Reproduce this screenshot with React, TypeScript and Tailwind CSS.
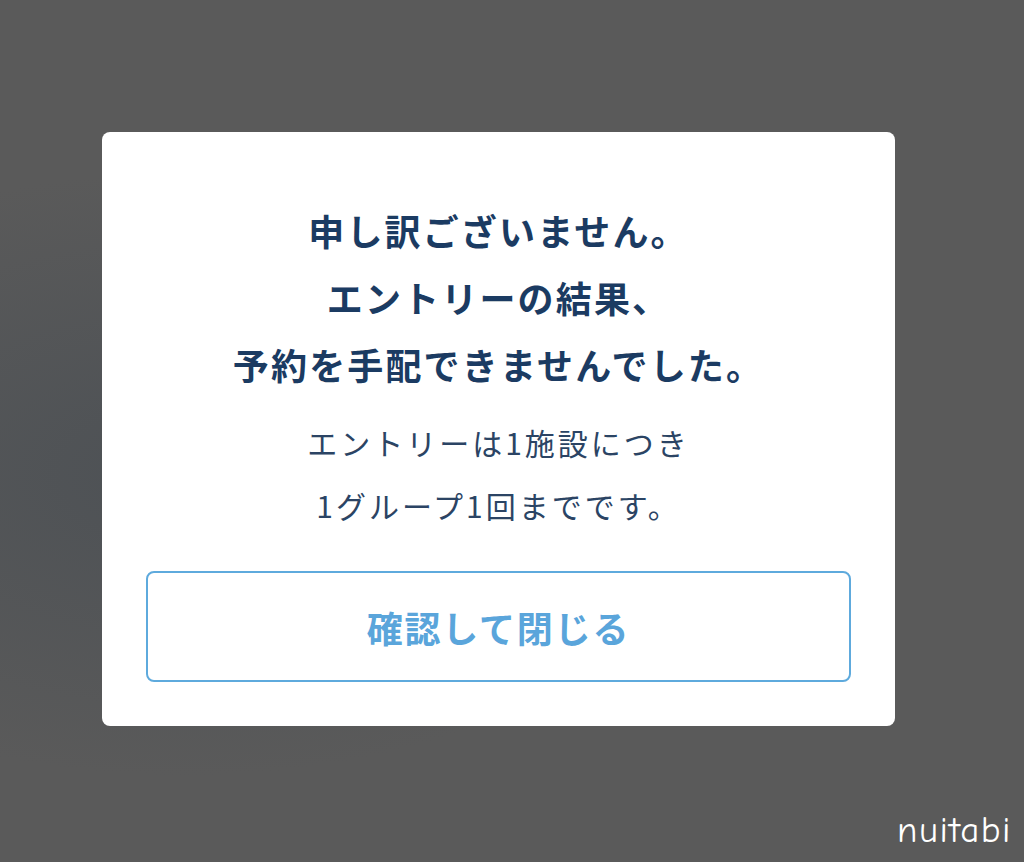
const titleLines = ["申し訳ございません。", "エントリーの結果、", "予約を手配できませんでした。"];
const bodyLines = ["エントリーは1施設につき", "1グループ1回までです。"];

const App = () => {
    return (
        <div className="relative w-[1024px] h-[862px] overflow-hidden bg-[#5a5a5a] bg-[radial-gradient(ellipse_at_18%_55%,#4d5155_0%,#5a5a5a_45%)] pl-[102px] pt-[132px] font-['Noto_Sans_CJK_JP','Noto_Sans',sans-serif]">
            <div className="w-[793px] h-[594px] rounded-lg bg-white px-[44px] pt-[65px] pb-[44px] flex flex-col">
                <div className="flex flex-col items-center text-[#1b3b62] font-bold text-[36px] leading-[67px] tracking-[0.06em]">
                    {titleLines.map((line) => (
                        <p key={line}>{line}</p>
                    ))}
                </div>
                <div className="mt-[13px] flex flex-col items-center text-[#2b4464] text-[30px] leading-[63px] tracking-[0.1em]">
                    {bodyLines.map((line) => (
                        <p key={line}>{line}</p>
                    ))}
                </div>
                <button className="mt-[34px] h-[111px] w-full rounded-lg border-2 border-[#5eaadd] bg-white text-[#5aa5db] font-bold text-[36px] tracking-[0.05em]">
                    確認して閉じる
                </button>
            </div>
            <span className="absolute right-[12px] bottom-[4px] text-white text-[37px] tracking-[0.04em] font-['Comic_Sans_MS','Comic_Neue',cursive]">
                nuitabi
            </span>
        </div>
    );
};

export default App;
